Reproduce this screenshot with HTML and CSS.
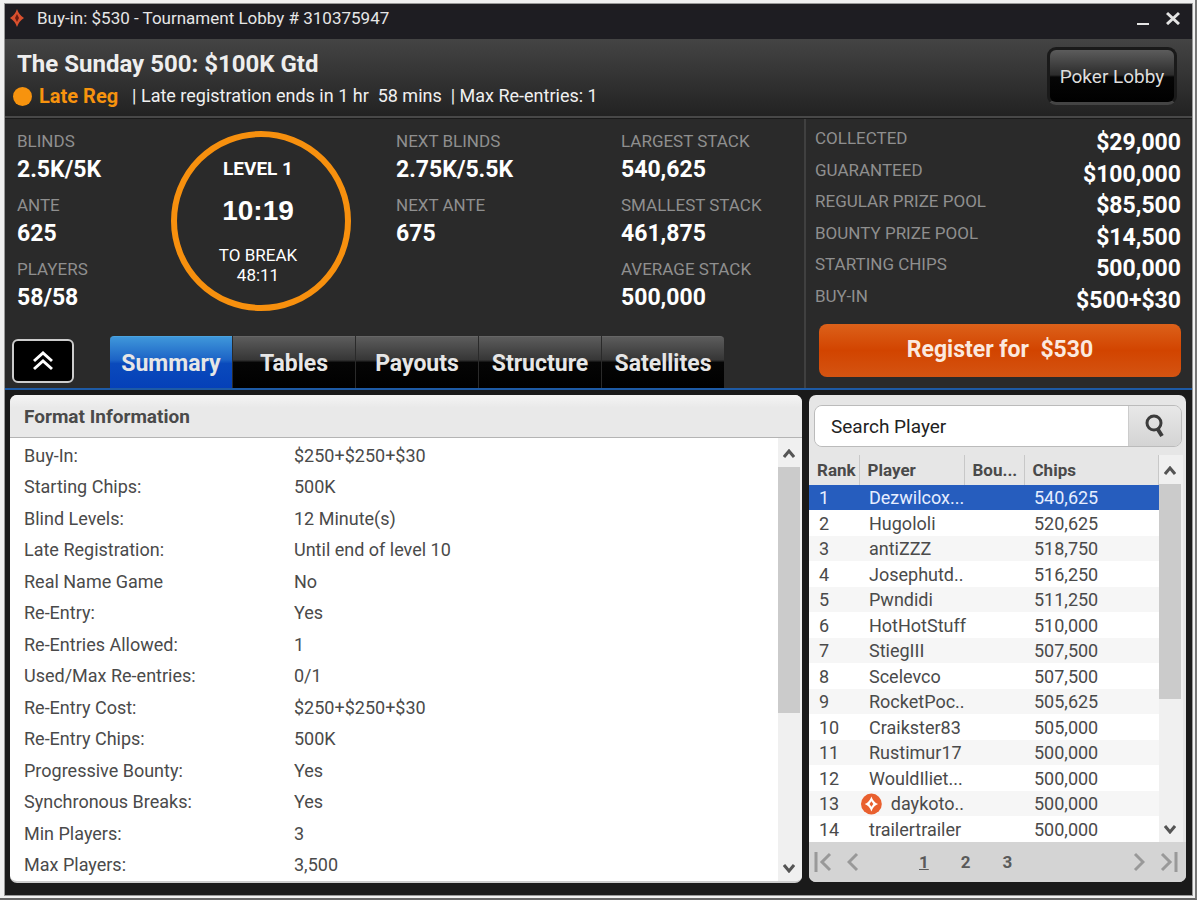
FILE: index.html
```html
<!DOCTYPE html>
<html lang="en">
<head>
  <meta charset="UTF-8">
  <meta name="viewport" content="width=device-width, initial-scale=1.0">
  <title>Tournament Lobby</title>
  <link rel="stylesheet" href="styles.css">
</head>
<body>
  <div class="window">
    <!-- Title bar -->
    <div class="titlebar">
      <svg class="app-icon" width="16" height="20" viewBox="0 0 16 20">
        <path d="M8 1 Q10 7 15 10 Q10 13 8 19 Q6 13 1 10 Q6 7 8 1Z" fill="#d9502e"/>
        <path d="M8 6 L10 10 L8 14 L6 10Z" fill="#6b1c12"/>
      </svg>
      <span class="titlebar-text">Buy-in: $530 - Tournament Lobby # 310375947</span>
      <button class="win-btn" aria-label="Minimize">
        <svg width="14" height="14" viewBox="0 0 14 14"><path d="M1 13H13" stroke="#e4e4e4" stroke-width="2"/></svg>
      </button>
      <button class="win-btn" aria-label="Close">
        <svg width="14" height="14" viewBox="0 0 14 14"><path d="M1 2L13 13M13 2L1 13" stroke="#e4e4e4" stroke-width="3"/></svg>
      </button>
    </div>

    <!-- Tournament header -->
    <header class="header">
      <div class="header-info">
        <h1 class="name">The Sunday 500: $100K Gtd</h1>
        <p class="status">
          <span class="dot"></span>
          <span class="late">Late Reg</span>
          <span class="status-text">| Late registration ends in 1 hr&nbsp; 58 mins&nbsp; | Max Re-entries: 1</span>
        </p>
      </div>
      <button class="lobby-btn">Poker Lobby</button>
    </header>

    <!-- Stats -->
    <section class="info">
      <div class="info-main">
        <div class="stats">
          <div class="stat-col">
            <div class="stat"><span class="label">BLINDS</span><span class="value">2.5K/5K</span></div>
            <div class="stat"><span class="label">ANTE</span><span class="value">625</span></div>
            <div class="stat"><span class="label">PLAYERS</span><span class="value">58/58</span></div>
          </div>
          <div class="clock">
            <span class="level">LEVEL 1</span>
            <span class="time">10:19</span>
            <span class="break">TO BREAK</span>
            <span class="break">48:11</span>
          </div>
          <div class="stat-col">
            <div class="stat"><span class="label">NEXT BLINDS</span><span class="value">2.75K/5.5K</span></div>
            <div class="stat"><span class="label">NEXT ANTE</span><span class="value">675</span></div>
          </div>
          <div class="stat-col">
            <div class="stat"><span class="label">LARGEST STACK</span><span class="value">540,625</span></div>
            <div class="stat"><span class="label">SMALLEST STACK</span><span class="value">461,875</span></div>
            <div class="stat"><span class="label">AVERAGE STACK</span><span class="value">500,000</span></div>
          </div>
        </div>
        <div class="tab-row">
          <button class="collapse-btn" aria-label="Collapse">
            <svg width="22" height="20" viewBox="0 0 22 20" fill="none" stroke="#fff" stroke-width="3">
              <path d="M2 10L11 2L20 10"/><path d="M2 18L11 10L20 18"/>
            </svg>
          </button>
          <nav class="tabs">
            <button class="tab active">Summary</button>
            <button class="tab">Tables</button>
            <button class="tab">Payouts</button>
            <button class="tab">Structure</button>
            <button class="tab">Satellites</button>
          </nav>
        </div>
      </div>
      <div class="info-side">
        <ul class="prizes">
          <li><span class="label">COLLECTED</span><span class="value">$29,000</span></li>
          <li><span class="label">GUARANTEED</span><span class="value">$100,000</span></li>
          <li><span class="label">REGULAR PRIZE POOL</span><span class="value">$85,500</span></li>
          <li><span class="label">BOUNTY PRIZE POOL</span><span class="value">$14,500</span></li>
          <li><span class="label">STARTING CHIPS</span><span class="value">500,000</span></li>
          <li><span class="label">BUY-IN</span><span class="value">$500+$30</span></li>
        </ul>
        <button class="register-btn">Register for&nbsp; $530</button>
      </div>
    </section>

    <!-- Panels -->
    <main class="panels">
      <section class="panel format">
        <h2 class="panel-title">Format Information</h2>
        <div class="panel-body">
          <dl class="format-list">
            <div><dt>Buy-In:</dt><dd>$250+$250+$30</dd></div>
            <div><dt>Starting Chips:</dt><dd>500K</dd></div>
            <div><dt>Blind Levels:</dt><dd>12 Minute(s)</dd></div>
            <div><dt>Late Registration:</dt><dd>Until end of level 10</dd></div>
            <div><dt>Real Name Game</dt><dd>No</dd></div>
            <div><dt>Re-Entry:</dt><dd>Yes</dd></div>
            <div><dt>Re-Entries Allowed:</dt><dd>1</dd></div>
            <div><dt>Used/Max Re-entries:</dt><dd>0/1</dd></div>
            <div><dt>Re-Entry Cost:</dt><dd>$250+$250+$30</dd></div>
            <div><dt>Re-Entry Chips:</dt><dd>500K</dd></div>
            <div><dt>Progressive Bounty:</dt><dd>Yes</dd></div>
            <div><dt>Synchronous Breaks:</dt><dd>Yes</dd></div>
            <div><dt>Min Players:</dt><dd>3</dd></div>
            <div><dt>Max Players:</dt><dd>3,500</dd></div>
          </dl>
          <div class="scrollbar">
            <button class="scroll-btn" aria-label="Scroll up"><svg width="12" height="10" viewBox="0 0 12 10"><path d="M1 8L6 2L11 8" fill="none" stroke="#555" stroke-width="3"/></svg></button>
            <div class="thumb"></div>
            <button class="scroll-btn" aria-label="Scroll down"><svg width="12" height="10" viewBox="0 0 12 10"><path d="M1 2L6 8L11 2" fill="none" stroke="#555" stroke-width="3"/></svg></button>
          </div>
        </div>
      </section>

      <section class="panel players">
        <form class="search">
          <input class="search-input" type="text" value="Search Player" aria-label="Search Player">
          <button class="search-btn" type="button" aria-label="Search">
            <svg width="20" height="24" viewBox="0 0 20 24" fill="none" stroke="#3c3c3c">
              <circle cx="9" cy="9" r="7" stroke-width="3"/><path d="M12 14L17 22" stroke-width="4"/>
            </svg>
          </button>
        </form>
        <div class="players-body">
          <table class="player-table">
            <thead>
              <tr><th class="col-rank">Rank</th><th class="col-player">Player</th><th class="col-bounty">Bou...</th><th>Chips</th></tr>
            </thead>
            <tbody>
              <tr class="selected"><td>1</td><td>Dezwilcox...</td><td></td><td>540,625</td></tr>
              <tr><td>2</td><td>Hugololi</td><td></td><td>520,625</td></tr>
              <tr><td>3</td><td>antiZZZ</td><td></td><td>518,750</td></tr>
              <tr><td>4</td><td>Josephutd..</td><td></td><td>516,250</td></tr>
              <tr><td>5</td><td>Pwndidi</td><td></td><td>511,250</td></tr>
              <tr><td>6</td><td>HotHotStuff</td><td></td><td>510,000</td></tr>
              <tr><td>7</td><td>StiegIII</td><td></td><td>507,500</td></tr>
              <tr><td>8</td><td>Scelevco</td><td></td><td>507,500</td></tr>
              <tr><td>9</td><td>RocketPoc..</td><td></td><td>505,625</td></tr>
              <tr><td>10</td><td>Craikster83</td><td></td><td>505,000</td></tr>
              <tr><td>11</td><td>Rustimur17</td><td></td><td>500,000</td></tr>
              <tr><td>12</td><td>WouldIliet...</td><td></td><td>500,000</td></tr>
              <tr>
                <td>13</td>
                <td class="with-badge"><span class="badge-name"><svg width="22" height="22" viewBox="0 0 22 22"><circle cx="11" cy="11" r="11" fill="#e9602f"/><path d="M11 3Q13 9 18 11Q13 13 11 19Q9 13 4 11Q9 9 11 3Z" fill="#fff"/><path d="M11 8L13 11L11 14L9 11Z" fill="#e9602f"/></svg>daykoto..</span></td>
                <td></td><td>500,000</td>
              </tr>
              <tr><td>14</td><td>trailertrailer</td><td></td><td>500,000</td></tr>
            </tbody>
          </table>
          <div class="scrollbar">
            <button class="scroll-btn" aria-label="Scroll up"><svg width="12" height="10" viewBox="0 0 12 10"><path d="M1 8L6 2L11 8" fill="none" stroke="#555" stroke-width="3"/></svg></button>
            <div class="thumb"></div>
            <button class="scroll-btn" aria-label="Scroll down"><svg width="12" height="10" viewBox="0 0 12 10"><path d="M1 2L6 8L11 2" fill="none" stroke="#555" stroke-width="3"/></svg></button>
          </div>
        </div>
        <nav class="pager">
          <button class="pager-btn" aria-label="First page"><svg width="18" height="20" viewBox="0 0 18 20" fill="none" stroke="#999" stroke-width="3"><path d="M2 0V20M16 2L8 10L16 18"/></svg></button>
          <button class="pager-btn" aria-label="Previous page"><svg width="12" height="20" viewBox="0 0 12 20" fill="none" stroke="#999" stroke-width="3"><path d="M10 2L2 10L10 18"/></svg></button>
          <div class="pages">
            <a class="page current" href="#">1</a>
            <a class="page" href="#">2</a>
            <a class="page" href="#">3</a>
          </div>
          <button class="pager-btn" aria-label="Next page"><svg width="12" height="20" viewBox="0 0 12 20" fill="none" stroke="#999" stroke-width="3"><path d="M2 2L10 10L2 18"/></svg></button>
          <button class="pager-btn" aria-label="Last page"><svg width="18" height="20" viewBox="0 0 18 20" fill="none" stroke="#999" stroke-width="3"><path d="M2 2L10 10L2 18M16 0V20"/></svg></button>
        </nav>
      </section>
    </main>
  </div>
</body>
</html>
```

FILE: styles.css
```css
* {
  box-sizing: border-box;
}
body {
  margin: 0;
  min-height: 100vh;
  padding: 3px 2px 2px 4px;
  background: #f0f0f0;
  border-right: 2px solid #777;
  border-bottom: 2px solid #666;
  font-family: Roboto, "Liberation Sans", sans-serif;
  font-size: 18px;
  color: #4a4a4a;
  display: flex;
  flex-direction: column;
}
button {
  font-family: inherit;
  padding: 0;
  border: none;
  background: none;
  cursor: pointer;
}
h1, h2, p, ul, dl, dd {
  margin: 0;
  padding: 0;
}
svg {
  display: block;
}
.window {
  flex: 1;
  display: flex;
  flex-direction: column;
  border: 1px solid #999;
  background: #1a1a1a;
}

/* title bar */
.titlebar {
  display: flex;
  align-items: center;
  gap: 16px;
  height: 35px;
  padding: 0 12px 7px 4px;
  background: #1e1d22;
}
.titlebar-text {
  flex: 1;
  margin-left: -4px;
  font-size: 17px;
  color: #e6e6e6;
}

/* header */
.header {
  display: flex;
  justify-content: space-between;
  align-items: flex-start;
  height: 79px;
  padding: 8px 15px 0 8px;
  background: linear-gradient(#444, #222);
  border-bottom: 2px solid #484848;
}
.name {
  padding-left: 4px;
  font-size: 24px;
  line-height: 34px;
  font-weight: 700;
  color: #eee;
}
.status {
  display: flex;
  align-items: center;
  line-height: 30px;
  color: #f0f0f0;
}
.dot {
  width: 19px;
  height: 19px;
  border-radius: 50%;
  background: #f7930e;
}
.late {
  margin: 0 14px 0 7px;
  font-size: 20px;
  font-weight: 700;
  color: #f7930e;
}
.status-text {
  font-size: 18px;
}
.lobby-btn {
  width: 130px;
  height: 58px;
  border: 3px solid #1a1a1a;
  border-bottom-color: #444;
  border-radius: 9px;
  background: linear-gradient(#5c5c5c, #2c2c2c 48%, #060606 52%, #000);
  font-size: 19px;
  color: #ddd;
}

/* stats area */
.info {
  display: flex;
  height: 272px;
  background: #2a2a2a;
  border-top: 1px solid #1a1a1a;
  border-bottom: 2px solid #1d5aa5;
}
.info-main {
  flex: 1;
  display: flex;
  flex-direction: column;
  justify-content: space-between;
}
.stats {
  display: grid;
  grid-template-columns: 154fr 225fr 225fr 183fr;
  padding: 8px 0 0 12px;
}
.stat-col {
  display: flex;
  flex-direction: column;
  gap: 6px;
}
.stat {
  display: flex;
  flex-direction: column;
}
.label {
  font-size: 17px;
  line-height: 28px;
  color: #8f8f8f;
}
.value {
  font-size: 23px;
  line-height: 30px;
  font-weight: 700;
  color: #fff;
}
.clock {
  width: 180px;
  height: 180px;
  margin-top: 4px;
  padding: 20px 6px 0 0;
  border: 6px solid #f7900e;
  border-radius: 50%;
  display: flex;
  flex-direction: column;
  align-items: center;
  color: #fff;
}
.level {
  font-size: 19px;
  line-height: 24px;
  font-weight: 700;
}
.time {
  margin-bottom: 4px;
  font-family: "Liberation Sans Narrow", "Liberation Sans", sans-serif;
  font-size: 28px;
  line-height: 60px;
  font-weight: 700;
}
.break {
  font-size: 17px;
  line-height: 20px;
}

/* tabs */
.tab-row {
  display: flex;
  align-items: flex-end;
  padding-left: 7px;
}
.collapse-btn {
  width: 62px;
  height: 44px;
  margin: 0 36px 5px 0;
  border: 2px solid #ccc;
  border-radius: 6px;
  background: #000;
  display: flex;
  align-items: center;
  justify-content: center;
}
.tabs {
  display: flex;
  gap: 1px;
}
.tab {
  width: 122px;
  height: 52px;
  padding-top: 2px;
  border-top: 1px solid #666;
  background: linear-gradient(#5c5c5c, #363636 45%, #050505 50%, #000);
  font-size: 23px;
  font-weight: 700;
  color: #e6e6e6;
}
.tab.active {
  border-top-color: #4ba3df;
  border-radius: 4px 0 0 0;
  background: linear-gradient(#3f97da, #1c63c6 45%, #0a4abc 52%, #0540b8);
}
.tab:last-child {
  border-radius: 0 4px 0 0;
}

/* prize pool */
.info-side {
  width: 388px;
  padding: 6px 11px 0 9px;
  border-left: 2px solid #404040;
}
.prizes {
  list-style: none;
}
.prizes li {
  display: flex;
  justify-content: space-between;
  height: 32px;
}
.prizes li:nth-child(even) {
  height: 31px;
}
.prizes .label {
  line-height: 26px;
}
.prizes .value {
  line-height: 36px;
}
.register-btn {
  display: block;
  width: calc(100% - 4px);
  height: 53px;
  margin: 10px 0 0 4px;
  padding-bottom: 2px;
  border-radius: 8px;
  background: linear-gradient(#dc611a, #d24400 50%, #d45412);
  font-size: 23px;
  font-weight: 700;
  color: #fbe9df;
}

/* panels */
.panels {
  flex: 1;
  display: flex;
  align-items: flex-start;
  gap: 7px;
  padding: 5px 6px 0 5px;
}
.panel {
  border-radius: 7px;
  overflow: hidden;
}
.format {
  flex: 1;
  background: #fff;
  border-bottom: 2px solid #ccc;
}
.panel-title {
  height: 43px;
  padding-left: 14px;
  border-bottom: 1px solid #b4b4b4;
  background: linear-gradient(#f4f4f4, #e9e9e9 30%);
  font-size: 19px;
  line-height: 44px;
  color: #4a4a4a;
}
.panel-body {
  display: flex;
}
.format-list {
  flex: 1;
  padding: 2px 0 0 14px;
}
.format-list div {
  display: flex;
  line-height: 31px;
}
.format-list div:nth-child(even) {
  line-height: 32px;
}
.format-list dt {
  width: 270px;
}

/* scrollbars */
.scrollbar {
  width: 24px;
  padding: 3px 2px 0 0;
  background: #f0f0f0;
  display: flex;
  flex-direction: column;
}
.scroll-btn {
  height: 26px;
  display: flex;
  align-items: center;
  justify-content: center;
}
.scroll-btn:last-child {
  margin-top: auto;
}
.thumb {
  height: 56%;
  background: #cbcbcb;
}

/* player list */
.players {
  width: 377px;
  background: #e6e6e6;
}
.search {
  display: flex;
  height: 42px;
  margin: 10px 4px 8px 5px;
  border: 1px solid #bbb;
  border-radius: 8px;
  overflow: hidden;
}
.search-input {
  flex: 1;
  min-width: 0;
  padding: 0 16px;
  border: none;
  background: #fff;
  font-family: inherit;
  font-size: 19px;
  color: #222;
}
.search-btn {
  width: 53px;
  border-left: 1px solid #ccc;
  background: linear-gradient(#e8e8e8, #d4d4d4);
  display: flex;
  align-items: center;
  justify-content: center;
}
.players-body {
  display: flex;
  padding-right: 3px;
}
.player-table {
  flex: 1;
  width: 100%;
  border-collapse: collapse;
  table-layout: fixed;
}
.player-table th {
  height: 30px;
  padding: 0 8px;
  border-right: 1px solid #c8c8c8;
  font-size: 17px;
  font-weight: 700;
  text-align: left;
}
.player-table .col-rank {
  width: 50px;
}
.player-table .col-player {
  width: 105px;
}
.player-table .col-bounty {
  width: 60px;
}
.player-table td {
  height: 25px;
  padding: 0 0 0 10px;
  line-height: 25px;
  white-space: nowrap;
  background: #f6f6f6;
}
.player-table tr:nth-child(even) td {
  height: 26px;
  background: #fff;
}
.player-table .selected td {
  background: #265dbe;
  color: #e6eeff;
}
.player-table .with-badge {
  padding-left: 2px;
}
.badge-name {
  display: flex;
  align-items: center;
  gap: 9px;
}

/* pager */
.pager {
  display: flex;
  align-items: center;
  gap: 15px;
  height: 40px;
  padding: 0 8px 0 5px;
  background: #d4d4d4;
}
.pages {
  flex: 1;
  display: flex;
  gap: 32px;
  padding-left: 45px;
}
.page {
  font-size: 17px;
  font-weight: 700;
  color: #5a5a5a;
  text-decoration: none;
}
.page.current {
  text-decoration: underline;
}
```
